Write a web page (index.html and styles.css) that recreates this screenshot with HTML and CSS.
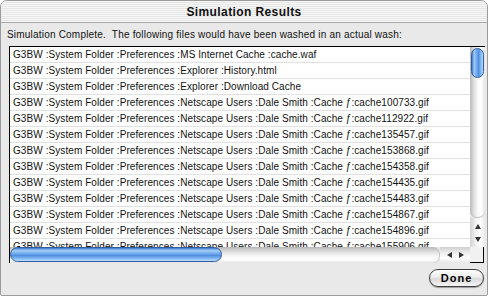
FILE: index.html
```html
<!DOCTYPE html>
<html lang="en">
<head>
    <meta charset="UTF-8">
    <meta name="viewport" content="width=device-width, initial-scale=1.0">
    <title>Simulation Results</title>
    <link rel="stylesheet" href="styles.css">
</head>
<body>
    <div class="window">
        <div class="titlebar"><span class="title">Simulation Results</span></div>

        <p class="message">Simulation Complete.&nbsp; The following files would have been washed in an actual wash:</p>

        <!-- Results list with scrollbars -->
        <div class="results">
            <ul class="file-list">
                <li>G3BW :System Folder :Preferences :MS Internet Cache :cache.waf</li>
                <li>G3BW :System Folder :Preferences :Explorer :History.html</li>
                <li>G3BW :System Folder :Preferences :Explorer :Download Cache</li>
                <li>G3BW :System Folder :Preferences :Netscape Users :Dale Smith :Cache ƒ:cache100733.gif</li>
                <li>G3BW :System Folder :Preferences :Netscape Users :Dale Smith :Cache ƒ:cache112922.gif</li>
                <li>G3BW :System Folder :Preferences :Netscape Users :Dale Smith :Cache ƒ:cache135457.gif</li>
                <li>G3BW :System Folder :Preferences :Netscape Users :Dale Smith :Cache ƒ:cache153868.gif</li>
                <li>G3BW :System Folder :Preferences :Netscape Users :Dale Smith :Cache ƒ:cache154358.gif</li>
                <li>G3BW :System Folder :Preferences :Netscape Users :Dale Smith :Cache ƒ:cache154435.gif</li>
                <li>G3BW :System Folder :Preferences :Netscape Users :Dale Smith :Cache ƒ:cache154483.gif</li>
                <li>G3BW :System Folder :Preferences :Netscape Users :Dale Smith :Cache ƒ:cache154867.gif</li>
                <li>G3BW :System Folder :Preferences :Netscape Users :Dale Smith :Cache ƒ:cache154896.gif</li>
                <li>G3BW :System Folder :Preferences :Netscape Users :Dale Smith :Cache ƒ:cache155906.gif</li>
            </ul>
            <div class="vscroll">
                <div class="vtrack"><div class="vthumb"></div></div>
                <div class="varrows"><span class="arrow up"></span><span class="arrow down"></span></div>
            </div>
            <div class="hscroll">
                <div class="htrack"><div class="hthumb"></div></div>
                <div class="harrows"><span class="arrow left"></span><span class="arrow right"></span></div>
            </div>
            <div class="grow-box"></div>
        </div>

        <div class="actions">
            <button class="done" type="button">Done</button>
        </div>
    </div>
</body>
</html>
```

FILE: styles.css
```css
* {
    box-sizing: border-box;
}

body {
    margin: 0;
    background: #fff;
    font-family: "Liberation Sans", Arial, sans-serif;
}

.window {
    width: 488px;
    height: 296px;
    border: 1px solid #9c9c9c;
    border-radius: 7px 7px 2px 2px;
    background: #e9e9e9;
    display: flex;
    flex-direction: column;
    overflow: hidden;
}

/* Title bar */
.titlebar {
    height: 22px;
    border-bottom: 1px solid #a9a9a9;
    background: repeating-linear-gradient(to bottom, #f7f7f7 0, #f7f7f7 1px, #e6e6e6 1px, #e6e6e6 2px);
    display: flex;
    align-items: center;
    justify-content: center;
}

.title {
    font-size: 12px;
    font-weight: bold;
    color: #111;
    letter-spacing: 0.4px;
    padding-top: 1px;
}

.message {
    margin: 0;
    padding: 5px 0 0 6px;
    font-size: 10px;
    line-height: 13px;
    letter-spacing: 0.2px;
    color: #111;
    white-space: nowrap;
}

/* Results list */
.results {
    margin: 5px 0 0 8px;
    width: 476px;
    display: grid;
    grid-template-columns: 460px 15px;
    grid-template-rows: 200px 16px;
    border-top: 1px solid #000;
    border-left: 1px solid #000;
}

.file-list {
    margin: 0;
    padding: 0;
    list-style: none;
    background: #fff;
    overflow: hidden;
}

.file-list li {
    height: 16px;
    line-height: 15px;
    padding-left: 3px;
    border-bottom: 1px solid #e1e1e1;
    font-size: 10px;
    letter-spacing: 0.08px;
    color: #111;
    white-space: nowrap;
}

/* Scrollbars */
.vscroll {
    display: flex;
    flex-direction: column;
}

.vtrack {
    flex: 1;
    padding: 1px 1px 0 1px;
    border-radius: 0 0 7px 7px;
    background: linear-gradient(to right, #b9b9b9, #dedede 25%, #fbfbfb 55%, #fff 75%, #e6e6e6);
    box-shadow: inset 0 -1px 0 #c4c4c4;
}

.vthumb {
    height: 30px;
    border: 1px solid #2f5d9e;
    border-radius: 7px;
    background: linear-gradient(to right, #3c78cf, #9fcaf6 20%, #6fa7ea 45%, #4f8ee2 60%, #8ec0f6 85%, #b9dbfb);
}

.varrows {
    height: 29px;
    display: flex;
    flex-direction: column;
    align-items: center;
    justify-content: center;
    gap: 8px;
    background: linear-gradient(to right, #d2d2d2, #f2f2f2 40%, #fff 70%, #e8e8e8);
}

.hscroll {
    display: flex;
}

.htrack {
    flex: 1;
    border-radius: 0 7px 7px 0;
    background: linear-gradient(to bottom, #b6b6b6, #d9d9d9 25%, #f7f7f7 55%, #fff 80%, #e2e2e2);
    box-shadow: inset -1px 0 0 #c4c4c4;
}

.hthumb {
    width: 212px;
    height: 15px;
    border: 1px solid #2f5d9e;
    border-radius: 8px;
    background: linear-gradient(to bottom, #3c78cf, #a4cdf7 20%, #6fa7ea 45%, #4f8ee2 58%, #8ec0f6 85%, #c0dffc);
}

.harrows {
    width: 30px;
    display: flex;
    align-items: center;
    justify-content: center;
    gap: 7px;
    background: linear-gradient(to bottom, #d0d0d0, #f0f0f0 40%, #fff 70%, #e6e6e6);
}

.arrow {
    width: 0;
    height: 0;
}

.arrow.up {
    border-left: 3px solid transparent;
    border-right: 3px solid transparent;
    border-bottom: 5px solid #333;
}

.arrow.down {
    border-left: 3px solid transparent;
    border-right: 3px solid transparent;
    border-top: 5px solid #333;
}

.arrow.left {
    border-top: 3px solid transparent;
    border-bottom: 3px solid transparent;
    border-right: 5px solid #333;
}

.arrow.right {
    border-top: 3px solid transparent;
    border-bottom: 3px solid transparent;
    border-left: 5px solid #333;
}

.grow-box {
    width: 14px;
    background: #f1f1f1;
    border-right: 1px solid #000;
    border-bottom: 1px solid #000;
}

/* Bottom button row */
.actions {
    display: flex;
    justify-content: flex-end;
    padding: 6px 3px 0 0;
}

.done {
    width: 55px;
    height: 18px;
    padding: 0;
    border: 1px solid #3f3f3f;
    border-radius: 9px;
    background: linear-gradient(to bottom, #fdfdfd, #ececec 45%, #d9d9d9 55%, #f6f6f6);
    box-shadow: 0 1px 1px rgba(0, 0, 0, 0.35);
    font-family: "Liberation Sans", Arial, sans-serif;
    font-size: 11px;
    font-weight: bold;
    letter-spacing: 1px;
    color: #000;
}
```
